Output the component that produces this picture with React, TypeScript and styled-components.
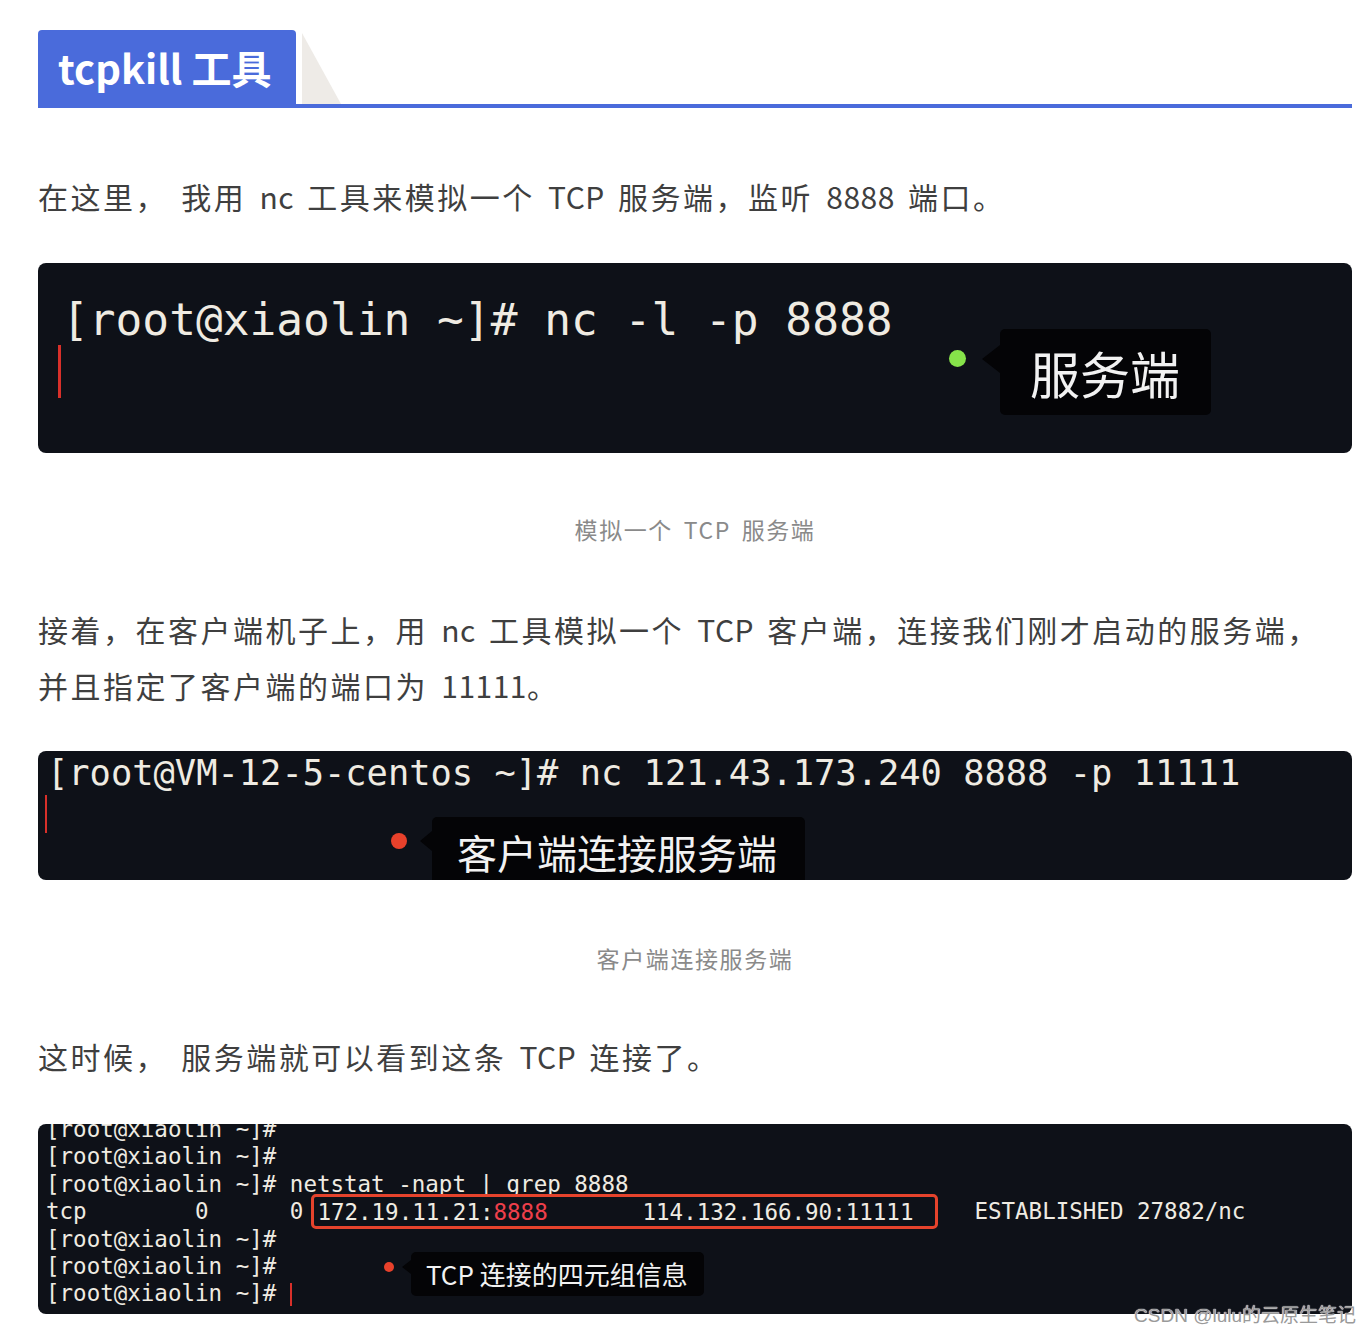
import React from "react";
import styled, { createGlobalStyle } from "styled-components";

const Global = createGlobalStyle`
  html, body { margin: 0; padding: 0; background: #ffffff; }
  body { font-family: "Noto Sans CJK SC", "Noto Sans", sans-serif; }
`;

const Page = styled.div`
  position: relative;
  width: 1370px;
  height: 1336px;
  overflow: hidden;
  padding: 30px 18px 0 38px;
  box-sizing: border-box;
`;

const Header = styled.div`
  display: flex;
  align-items: flex-end;
  border-bottom: 4px solid #4a6bdb;
`;

const TitleBox = styled.h2`
  margin: 0;
  height: 74px;
  line-height: 74px;
  padding: 0 24px 0 20px;
  background: #4a6bdb;
  color: #ffffff;
  font-family: "Noto Sans CJK SC", sans-serif;
  font-size: 40px;
  font-weight: 700;
  border-radius: 4px 4px 0 0;
`;

const Fold = styled.span`
  width: 0;
  height: 0;
  margin-left: 6px;
  border-left: 39px solid #eeebe7;
  border-top: 71px solid transparent;
`;

const Para = styled.p<{ $mt: number }>`
  margin: ${(p) => p.$mt}px 0 0;
  padding-right: 20px;
  font-size: 30px;
  line-height: 56px;
  letter-spacing: 2.5px;
  word-spacing: 4px;
  color: #3f3f3f;
`;

const Latin = styled.span`
  letter-spacing: 0.5px;
`;

const Caption = styled.p<{ $mt: number }>`
  margin: ${(p) => p.$mt}px 0 0;
  text-align: center;
  font-size: 23px;
  line-height: 32px;
  letter-spacing: 1.6px;
  word-spacing: 4px;
  color: #8a8a8a;
`;

const Terminal = styled.div<{ $h: number; $mt: number }>`
  position: relative;
  margin-top: ${(p) => p.$mt}px;
  height: ${(p) => p.$h}px;
  background: #0e1118;
  border-radius: 8px;
  overflow: hidden;
`;

const Screen = styled.pre<{ $size: number; $lh: number; $mt: number; $pl: number }>`
  margin: ${(p) => p.$mt}px 0 0;
  padding: 0 0 0 ${(p) => p.$pl}px;
  font-family: "DejaVu Sans Mono", "Liberation Mono", monospace;
  font-size: ${(p) => p.$size}px;
  line-height: ${(p) => p.$lh}px;
  color: #efebe2;
  white-space: pre;
`;

const BlockCursor = styled.span<{ $h: number; $w: number; $ml: number; $mt: number }>`
  display: block;
  width: ${(p) => p.$w}px;
  height: ${(p) => p.$h}px;
  margin: ${(p) => p.$mt}px 0 0 ${(p) => p.$ml}px;
  background: #d8302a;
`;

const InlineCursor = styled.span`
  display: inline-block;
  width: 2px;
  height: 23px;
  vertical-align: -5px;
  background: #d8302a;
`;

const Highlight = styled.span`
  border: 3px solid #e5432c;
  border-radius: 5px;
  padding: 1.5px 22px 1.5px 3.5px;
  margin-left: 7.5px;
`;

const Port = styled.span`
  color: #ee3f4b;
`;

const After = styled.span`
  margin-left: 36px;
`;

const Callout = styled.div<{ $left: number; $top: number }>`
  position: absolute;
  left: ${(p) => p.$left}px;
  top: ${(p) => p.$top}px;
  display: flex;
  align-items: flex-start;
`;

const Dot = styled.span<{ $size: number; $color: string; $mt: number }>`
  flex: none;
  width: ${(p) => p.$size}px;
  height: ${(p) => p.$size}px;
  margin-top: ${(p) => p.$mt}px;
  border-radius: 50%;
  background: ${(p) => p.$color};
`;

const Bubble = styled.div<{
  $ml: number;
  $fs: number;
  $h: number;
  $pl: number;
  $pr: number;
  $pt: number;
  $ph: number;
  $pw: number;
}>`
  position: relative;
  margin-left: ${(p) => p.$ml}px;
  height: ${(p) => p.$h}px;
  line-height: ${(p) => p.$h}px;
  padding: 0 ${(p) => p.$pr}px 0 ${(p) => p.$pl}px;
  font-family: "Noto Sans CJK SC", sans-serif;
  font-size: ${(p) => p.$fs}px;
  color: #f2f2f2;
  background: #040406;
  border-radius: 5px;
  white-space: nowrap;

  &::before {
    content: "";
    position: absolute;
    right: 100%;
    top: ${(p) => p.$pt - p.$ph}px;
    border-right: ${(p) => p.$pw}px solid #040406;
    border-top: ${(p) => p.$ph}px solid transparent;
    border-bottom: ${(p) => p.$ph}px solid transparent;
  }
`;

const Watermark = styled.div`
  position: absolute;
  right: 14px;
  top: 1304px;
  font-family: "Liberation Sans", "Noto Sans CJK SC", sans-serif;
  font-size: 19px;
  line-height: 24px;
  color: #9a9a9a;
  text-shadow: 0 0 1px #ffffff, 0 0 1px #ffffff;
`;

export default function App() {
  return (
    <Page>
      <Global />
      <Header>
        <TitleBox>tcpkill 工具</TitleBox>
        <Fold />
      </Header>

      <Para $mt={60}>
        在这里， 我用 <Latin>nc</Latin> 工具来模拟一个 <Latin>TCP</Latin> 服务端，监听 <Latin>8888</Latin> 端口。
      </Para>

      <Terminal $h={190} $mt={39}>
        <Screen $size={44.5} $lh={52} $mt={31} $pl={24}>
          {"[root@xiaolin ~]# nc -l -p 8888"}
          <BlockCursor $h={53} $w={3} $ml={-4} $mt={-1} />
        </Screen>
        <Callout $left={911} $top={66}>
          <Dot $size={17} $color="#86e34a" $mt={21} />
          <Bubble $ml={34} $fs={50} $h={86} $pl={30} $pr={31} $pt={30} $ph={14} $pw={18}>
            服务端
          </Bubble>
        </Callout>
      </Terminal>

      <Caption $mt={60}>模拟一个 TCP 服务端</Caption>

      <Para $mt={56}>
        接着，在客户端机子上，用 <Latin>nc</Latin> 工具模拟一个 <Latin>TCP</Latin> 客户端，连接我们刚才启动的服务端，并且指定了客户端的端口为 <Latin>11111</Latin>。
      </Para>

      <Terminal $h={129} $mt={38}>
        <Screen $size={35.4} $lh={40} $mt={2} $pl={9}>
          {"[root@VM-12-5-centos ~]# nc 121.43.173.240 8888 -p 11111"}
          <BlockCursor $h={38} $w={2} $ml={-2} $mt={2} />
        </Screen>
        <Callout $left={353} $top={66}>
          <Dot $size={16} $color="#e8412b" $mt={16} />
          <Bubble $ml={25} $fs={40} $h={70} $pl={25} $pr={28} $pt={24} $ph={10} $pw={12}>
            客户端连接服务端
          </Bubble>
        </Callout>
      </Terminal>

      <Caption $mt={62}>客户端连接服务端</Caption>

      <Para $mt={54}>
        这时候， 服务端就可以看到这条 <Latin>TCP</Latin> 连接了。
      </Para>

      <Terminal $h={190} $mt={40}>
        <Screen $size={22.5} $lh={27.4} $mt={-8} $pl={8}>
          {"[root@xiaolin ~]#\n"}
          {"[root@xiaolin ~]#\n"}
          {"[root@xiaolin ~]# netstat -napt | grep 8888\n"}
          {"tcp        0      0"}
          <Highlight>
            {"172.19.11.21:"}
            <Port>8888</Port>
            {"       114.132.166.90:11111"}
          </Highlight>
          <After>ESTABLISHED 27882/nc</After>
          {"\n"}
          {"[root@xiaolin ~]#\n"}
          {"[root@xiaolin ~]#\n"}
          {"[root@xiaolin ~]# "}
          <InlineCursor />
        </Screen>
        <Callout $left={346} $top={128}>
          <Dot $size={10} $color="#e8412b" $mt={10} />
          <Bubble $ml={17} $fs={26} $h={44} $pl={15} $pr={16} $pt={15} $ph={7} $pw={9}>
            TCP 连接的四元组信息
          </Bubble>
        </Callout>
      </Terminal>

      <Watermark>CSDN @lulu的云原生笔记</Watermark>
    </Page>
  );
}
